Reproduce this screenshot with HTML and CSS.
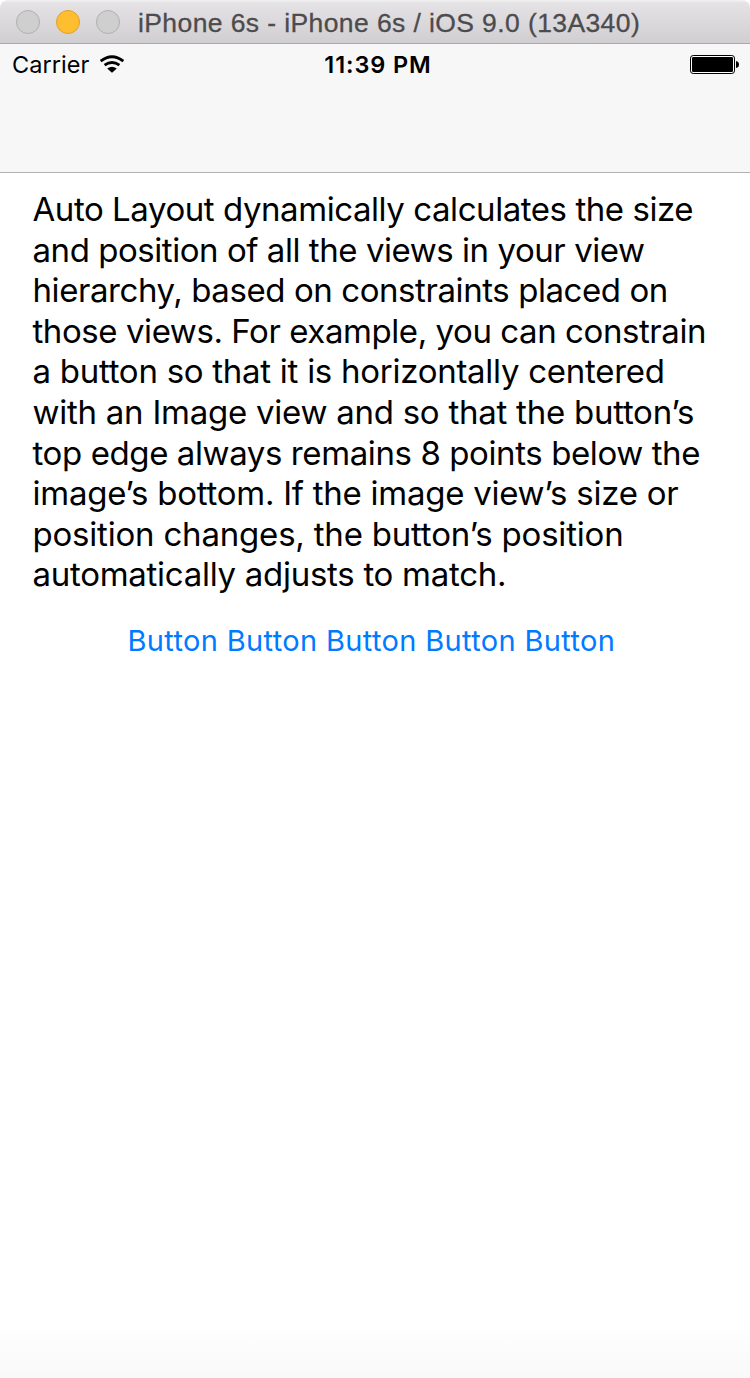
FILE: index.html
```html
<!DOCTYPE html>
<html lang="en">
<head>
<meta charset="utf-8">
<title>iPhone 6s</title>
<link rel="stylesheet" href="styles.css">
</head>
<body>
<div class="window">
  <header class="titlebar">
    <span class="light"></span>
    <span class="light light-minimize"></span>
    <span class="light"></span>
    <span class="title">iPhone 6s - iPhone 6s / iOS 9.0 (13A340)</span>
  </header>
  <div class="navbar">
    <div class="status">
      <div class="carrier">
        <span class="carrier-name">Carrier</span>
        <svg class="wifi" width="26" height="20" viewBox="0 0 26 20">
          <path d="M1.7 6.1 Q13 -2.7 24.3 6.1" fill="none" stroke="#000" stroke-width="2.9"/>
          <path d="M5.6 10.2 Q13 4.6 20.4 10.2" fill="none" stroke="#000" stroke-width="2.9"/>
          <path d="M8.2 13.4 Q13 10.2 17.8 13.4 L13 17.8 Z"/>
        </svg>
      </div>
      <span class="time">11:39 PM</span>
      <svg class="battery" width="50" height="20" viewBox="0 0 50 20">
        <rect x=".5" y=".5" width="44" height="18" rx="2.7" fill="#fff" stroke="#000"/>
        <rect x="2" y="2" width="41" height="15" rx="1.3"/>
        <path d="M46 6 Q49 6.5 49 9.5 T46 13 Z"/>
      </svg>
    </div>
  </div>
  <main class="content">
    <p class="copy">
      <span class="line l1">Auto Layout dynamically calculates the size</span>
      <span class="line l2">and position of all the views in your view</span>
      <span class="line l3">hierarchy, based on constraints placed on</span>
      <span class="line l4">those views. For example, you can constrain</span>
      <span class="line l5">a button so that it is horizontally centered</span>
      <span class="line l6">with an Image view and so that the button’s</span>
      <span class="line l7">top edge always remains 8 points below the</span>
      <span class="line l8">image’s bottom. If the image view’s size or</span>
      <span class="line l9">position changes, the button’s position</span>
      <span class="line l10">automatically adjusts to match.</span>
    </p>
    <button class="action">Button Button Button Button Button</button>
  </main>
</div>
</body>
</html>
```
FILE: styles.css
```css
body { margin: 0; background: #fff; }
.window {
  width: 750px; height: 1378px; display: flex; flex-direction: column;
  font-family: Inter, "Liberation Sans", sans-serif; color: #000;
  background: #fff linear-gradient(#fff, #f9f9f9) bottom / 100% 60px no-repeat;
}
.titlebar {
  box-sizing: border-box; height: 44px; padding-left: 16px;
  display: flex; align-items: center; gap: 16px;
  background: linear-gradient(#f3f2f3 0, #e4e2e4 3px, #d0ced0 100%);
  border-bottom: 1px solid #aaa9aa; border-radius: 8px 8px 0 0;
}
.light {
  box-sizing: border-box; width: 24px; height: 24px; border-radius: 50%;
  background: #cfcfcf; border: 1px solid #b0b0b0;
}
.light-minimize { background: #ffbe2f; border-color: #e0a02a; }
.title {
  margin-left: 2px; padding-top: 2px; font: 26.5px/44px "Liberation Sans", sans-serif;
  color: #4c4b4d; letter-spacing: .4px; white-space: nowrap;
  -webkit-text-stroke: .3px #4c4b4d;
}
.navbar {
  box-sizing: border-box; height: 129px; background: #f7f7f7;
  border-bottom: 1px solid #b2b2b2;
}
.status {
  height: 42px; padding: 0 10px 0 12px; display: grid;
  grid-template-columns: 1fr auto 1fr; align-items: center;
}
.carrier { display: flex; align-items: center; gap: 10px; }
.carrier-name { font-size: 23.5px; padding-bottom: 2px; letter-spacing: .05px; }
.time { font-size: 23.5px; font-weight: 600; letter-spacing: .9px; padding: 0 0 2px 4px; }
.battery { justify-self: end; }
.content { display: flex; flex-direction: column; align-items: flex-start; padding: 16px 0 0 32.5px; }
.copy { margin: 0; font-size: 33px; line-height: 40.6px; }
.line { display: block; white-space: nowrap; }
.l1 { letter-spacing: -.44px; }
.l2 { letter-spacing: -.45px; }
.l3 { letter-spacing: -.42px; }
.l4 { letter-spacing: -.43px; }
.l5 { letter-spacing: -.27px; }
.l6 { letter-spacing: -.25px; }
.l7 { letter-spacing: -.4px; }
.l8 { letter-spacing: -.26px; }
.l9 { letter-spacing: -.2px; }
.l10 { letter-spacing: -.28px; }
.action {
  margin: 28px 0 0 95px; padding: 0; border: 0; background: none;
  font-family: inherit; font-size: 29px; line-height: 36px; color: #007aff;
  letter-spacing: .35px;
}
```
